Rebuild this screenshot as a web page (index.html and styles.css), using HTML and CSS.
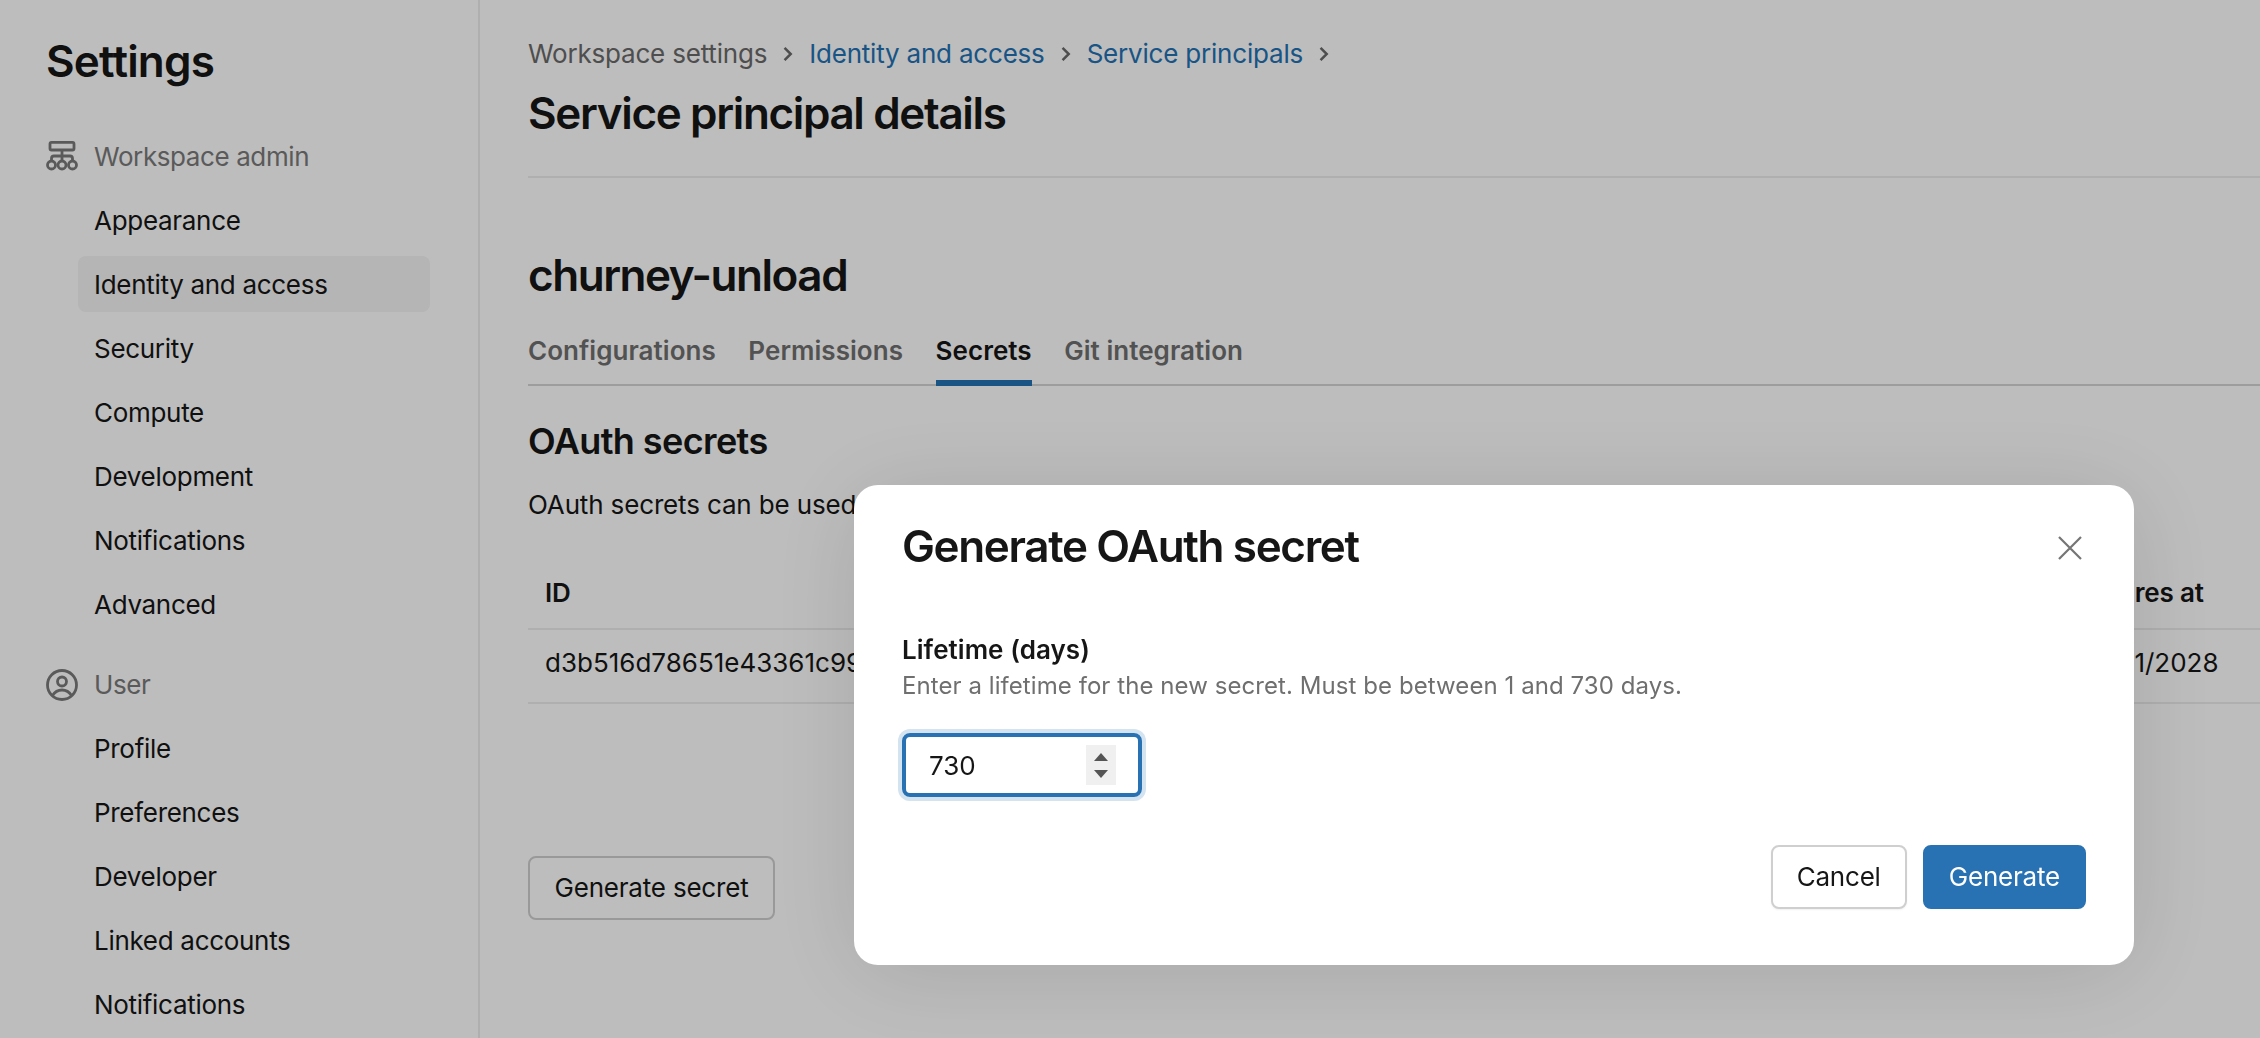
FILE: index.html
```html
<!DOCTYPE html>
<html lang="en">
<head>
<meta charset="utf-8">
<title>Service principal details</title>
<link rel="stylesheet" href="styles.css">
</head>
<body>
<div class="app">
  <aside class="sidebar">
    <h1 class="side-title">Settings</h1>
    <div class="group-head">
      <svg class="group-icon" viewBox="0 0 32 32" fill="none" stroke="currentColor" stroke-width="2.800"><rect x="4" y="1.400" width="24" height="7.600" rx="1.500"/><path d="M16 9v10M5.500 19v-1.500q0-2.500 2.500-2.500h16q2.500 0 2.500 2.500V19"/><circle cx="5.500" cy="24" r="4"/><circle cx="16" cy="24" r="4"/><circle cx="26.500" cy="24" r="4"/></svg>
      <span>Workspace admin</span>
    </div>
    <nav class="nav">
      <a class="nav-item">Appearance</a>
      <a class="nav-item active">Identity and access</a>
      <a class="nav-item">Security</a>
      <a class="nav-item">Compute</a>
      <a class="nav-item">Development</a>
      <a class="nav-item">Notifications</a>
      <a class="nav-item">Advanced</a>
    </nav>
    <div class="group-head user-head">
      <svg class="group-icon" viewBox="0 0 32 32" fill="none" stroke="currentColor" stroke-width="2.800"><circle cx="16" cy="16" r="14.500"/><circle cx="16" cy="12.500" r="4.500"/><path d="M6.500 26.500C9 22.500 12 21 16 21s7 1.500 9.500 5.500"/></svg>
      <span>User</span>
    </div>
    <nav class="nav">
      <a class="nav-item">Profile</a>
      <a class="nav-item">Preferences</a>
      <a class="nav-item">Developer</a>
      <a class="nav-item">Linked accounts</a>
      <a class="nav-item">Notifications</a>
    </nav>
  </aside>

  <main class="main">
    <div class="crumbs">
      <span>Workspace settings</span>
      <svg class="crumb-sep" viewBox="0 0 12 16" fill="none" stroke="currentColor" stroke-width="1.800"><path d="M3.500 3.500 8 8l-4.500 4.500"/></svg>
      <a class="crumb-link">Identity and access</a>
      <svg class="crumb-sep" viewBox="0 0 12 16" fill="none" stroke="currentColor" stroke-width="1.800"><path d="M3.500 3.500 8 8l-4.500 4.500"/></svg>
      <a class="crumb-link">Service principals</a>
      <svg class="crumb-sep" viewBox="0 0 12 16" fill="none" stroke="currentColor" stroke-width="1.800"><path d="M3.500 3.500 8 8l-4.500 4.500"/></svg>
    </div>
    <h1 class="page-title">Service principal details</h1>
    <hr class="rule">
    <h2 class="entity">churney-unload</h2>
    <div class="tabs">
      <a class="tab">Configurations</a>
      <a class="tab">Permissions</a>
      <a class="tab selected">Secrets</a>
      <a class="tab">Git integration</a>
    </div>
    <h3 class="section">OAuth secrets</h3>
    <p class="desc">OAuth secrets can be used to authenticate to Databricks APIs and tools.</p>
    <div class="table">
      <div class="cell head">ID</div>
      <div class="cell head">Expires at</div>
      <div class="cell">d3b516d78651e43361c99a07f2</div>
      <div class="cell">01/31/2028</div>
    </div>
    <button class="btn gen-secret">Generate secret</button>
  </main>
</div>

<div class="overlay">
  <section class="modal">
    <header class="modal-head">
      <h2 class="modal-title">Generate OAuth secret</h2>
      <svg class="close" viewBox="0 0 24 24" fill="none" stroke="currentColor" stroke-width="2.200"><path d="M1 1l22 22M23 1 1 23"/></svg>
    </header>
    <div class="field-label">Lifetime (days)</div>
    <div class="field-hint">Enter a lifetime for the new secret. Must be between 1 and 730 days.</div>
    <div class="number">
      <span class="number-value">730</span>
      <span class="spinner"><i class="tri up"></i><i class="tri down"></i></span>
    </div>
    <footer class="modal-foot">
      <button class="btn cancel">Cancel</button>
      <button class="btn primary">Generate</button>
    </footer>
  </section>
</div>
</body>
</html>
```
FILE: styles.css
```css
* { box-sizing: border-box; }
html, body { margin: 0; height: 100%; overflow: hidden; }
body {
  background: #fff;
  color: #161616;
  font-family: Inter, "Noto Sans", sans-serif;
  font-size: 26px;
  line-height: 36px;
  letter-spacing: -0.3px;
}
h1, h2, h3, p { margin: 0; }

.app { display: flex; height: 1038px; overflow: hidden; }

.sidebar {
  flex: 0 0 480px;
  border-right: 2px solid #ececec;
  padding: 33px 48px 0 46px;
}
.side-title { font-size: 44px; line-height: 56px; font-weight: 600; letter-spacing: -0.8px; }
.group-head {
  display: flex;
  align-items: center;
  gap: 16px;
  height: 64px;
  margin-top: 36px;
  color: #7a7a7a;
  letter-spacing: -0.4px;
}
.group-icon { width: 32px; height: 32px; flex: none; }
.user-head { margin-top: 16px; }
.nav { display: flex; flex-direction: column; margin-left: 32px; margin-top: 0; }
.nav-item {
  height: 64px;
  display: flex;
  align-items: center;
  padding-left: 16px;
}
.nav-item.active { height: 56px; margin: 3px 0 5px; padding-top: 2px; border-radius: 8px; background: #f4f4f4; }

.main { flex: 1; min-width: 0; padding: 36px 0 0 48px; }
.crumbs { display: flex; align-items: center; height: 36px; color: #6a6a6a; letter-spacing: -0.2px; }
.crumb-link { color: #2272b4; }
.crumb-sep { width: 18px; height: 22px; margin: 0 12px; color: #6a6a6a; flex: none; }
.page-title { font-size: 44px; line-height: 56px; font-weight: 600; margin-top: 13px; letter-spacing: -1.35px; }
.rule { border: 0; border-top: 2px solid #ececec; margin: 35px 0 0; }
.entity { font-size: 44px; line-height: 56px; font-weight: 600; margin-top: 69px; letter-spacing: -1.45px; }
.tabs { display: flex; gap: 32.5px; margin-top: 19px; height: 64px; border-bottom: 2px solid #d4d4d4; letter-spacing: 0.05px; }
.tab { font-weight: 600; color: #6f6f6f; height: 64px; padding-top: 11px; }
.tab.selected { color: #161616; border-bottom: 6px solid #2272b4; }
.section { font-size: 36px; line-height: 44px; font-weight: 600; margin-top: 33px; letter-spacing: -0.6px; }
.desc { margin-top: 24px; white-space: nowrap; letter-spacing: -0.15px; }
.table { display: grid; grid-template-columns: 1fr 195px; margin-top: 31px; letter-spacing: 0; }
.cell { height: 74px; padding: 15px 16px 0 17px; border-bottom: 2px solid #ececec; white-space: nowrap; }
.head { font-weight: 600; height: 76px; padding-top: 21px; letter-spacing: -0.2px; }
.btn {
  font: inherit;
  letter-spacing: -0.2px;
  height: 64px;
  border-radius: 8px;
  border: 2px solid #cfcfcf;
  background: #fff;
  color: #161616;
  padding: 0 24px;
}
.gen-secret { margin-top: 152px; padding: 0 24.5px; }

.overlay { position: fixed; inset: 0; background: rgba(0, 0, 0, .26); }
.modal {
  position: absolute;
  left: 854px;
  top: 485px;
  width: 1280px;
  height: 480px;
  padding: 33px 48px 0;
  background: #fff;
  border-radius: 24px;
  box-shadow: 0 8px 96px rgba(0, 0, 0, .12);
  display: flex;
  flex-direction: column;
}
.modal-head { display: flex; justify-content: space-between; align-items: center; height: 56px; }
.modal-title { font-size: 44px; line-height: 56px; font-weight: 600; letter-spacing: -1.35px; }
.close { width: 24px; height: 24px; color: #757575; margin-right: 4px; margin-top: 4px; }
.field-label { font-weight: 600; margin-top: 58px; letter-spacing: 0.05px; }
.field-hint { color: #6f6f6f; font-size: 24px; line-height: 36px; letter-spacing: 0.07px; }
.number {
  margin-top: 29px;
  width: 240px;
  height: 64px;
  border: 4px solid #2872b3;
  border-radius: 8px;
  box-shadow: 0 0 0 4px #d3e3f0;
  display: flex;
  align-items: center;
  justify-content: space-between;
  padding: 0 22px 0 23px;
  letter-spacing: 0;
}
.number-value { font-size: 26px; padding-top: 2px; }
.spinner {
  width: 30px;
  height: 40px;
  background: #f0f0f0;
  display: flex;
  flex-direction: column;
  align-items: center;
  justify-content: center;
  gap: 9px;
}
.tri { width: 0; height: 0; border-left: 7px solid transparent; border-right: 7px solid transparent; }
.tri.up { border-bottom: 8px solid #555; }
.tri.down { border-top: 8px solid #555; }
.modal-foot { display: flex; justify-content: flex-end; gap: 16px; margin-top: auto; padding-bottom: 56px; }
.cancel { padding: 0 24px; box-shadow: 0 1px 2px rgba(0,0,0,.06); }
.primary { padding: 0 24px; background: #2872b3; border-color: #2872b3; color: #fff; }
```
